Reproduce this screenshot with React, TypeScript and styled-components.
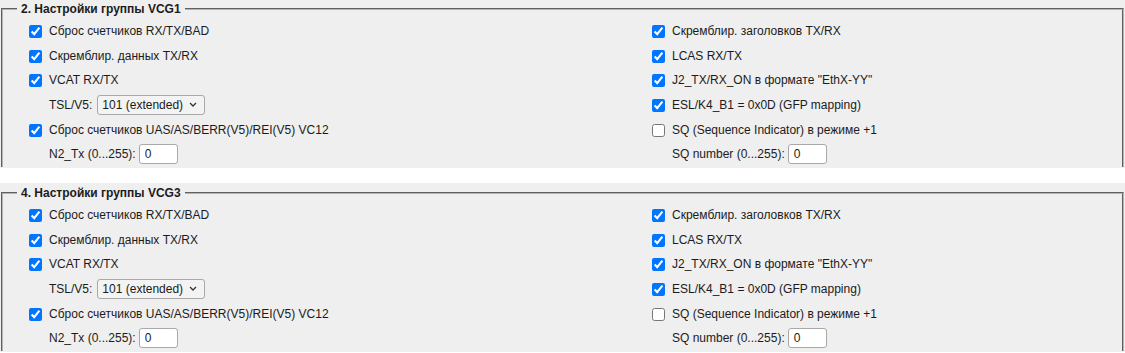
import styled, { createGlobalStyle } from "styled-components";

const GlobalStyle = createGlobalStyle`
  body {
    margin: 0;
    background: #fff;
    font-family: "Liberation Sans", Arial, sans-serif;
    font-size: 12px;
    color: #1b1b1b;
  }
`;

const Wrapper = styled.div`
  display: flex;
  flex-direction: column;
  gap: 15px;
  margin-top: -1px;
`;

const Group = styled.div`
  background: #efefef;
  padding-top: 3px;
  height: 169px;
  box-sizing: border-box;
  overflow: hidden;
`;

const Frame = styled.fieldset`
  margin: 0 1px;
  padding: 3px 0 0 14px;
  border: 2px groove #b4b4b4;
  border-bottom: none;
  min-width: 0;
`;

const Legend = styled.legend`
  font-weight: bold;
  padding: 0 4px;
  line-height: 14px;
`;

const Columns = styled.div`
  display: grid;
  grid-template-columns: 623px 1fr;
  padding-left: 8px;
`;

const Column = styled.div`
  display: flex;
  flex-direction: column;
`;

const Row = styled.label`
  display: flex;
  align-items: center;
  height: 24.6px;
  white-space: nowrap;
`;

const FieldRow = styled.div`
  display: flex;
  align-items: center;
  height: 24.6px;
  padding-left: 24px;
  white-space: nowrap;
`;

const Check = styled.input`
  width: 13px;
  height: 13px;
  margin: 1px 7px 0 4px;
`;

const SelectBox = styled.div`
  position: relative;
  margin-left: 5px;
  svg {
    position: absolute;
    right: 8px;
    top: 7px;
    pointer-events: none;
  }
`;

const Select = styled.select`
  appearance: none;
  width: 108px;
  height: 20px;
  padding: 0 0 0 4px;
  font: inherit;
  font-size: 12px;
  color: #1b1b1b;
  background: #f3f3f3;
  border: 1px solid #a9a9a9;
  border-radius: 3px;
`;

const NumInput = styled.input`
  width: 39px;
  height: 20px;
  box-sizing: border-box;
  margin-left: 3px;
  padding: 0 5px;
  font: inherit;
  font-size: 12px;
  color: #1b1b1b;
  background: #fff;
  border: 1px solid #a9a9a9;
  border-radius: 3px;
`;

type Opt = { text: string; checked: boolean };

const leftTop: Opt[] = [
  { text: "Сброс счетчиков RX/TX/BAD", checked: true },
  { text: "Скремблир. данных TX/RX", checked: true },
  { text: "VCAT RX/TX", checked: true },
];

const rightOpts: Opt[] = [
  { text: "Скремблир. заголовков TX/RX", checked: true },
  { text: "LCAS RX/TX", checked: true },
  { text: 'J2_TX/RX_ON в формате "EthX-YY"', checked: true },
  { text: "ESL/K4_B1 = 0x0D (GFP mapping)", checked: true },
  { text: "SQ (Sequence Indicator) в режиме +1", checked: false },
];

function Option({ text, checked }: Opt) {
  return (
    <Row>
      <Check type="checkbox" defaultChecked={checked} />
      <span>{text}</span>
    </Row>
  );
}

function Chevron() {
  return (
    <svg width="8" height="5" viewBox="0 0 8 5">
      <path d="M1 1l3 3 3-3" fill="none" stroke="#333" strokeWidth="1.3" />
    </svg>
  );
}

function VcgGroup({ title }: { title: string }) {
  return (
    <Group>
      <Frame>
        <Legend>{title}</Legend>
        <Columns>
          <Column>
            {leftTop.map((o) => (
              <Option key={o.text} {...o} />
            ))}
            <FieldRow>
              TSL/V5:
              <SelectBox>
                <Select defaultValue="101">
                  <option value="101">101 (extended)</option>
                </Select>
                <Chevron />
              </SelectBox>
            </FieldRow>
            <Option text="Сброс счетчиков UAS/AS/BERR(V5)/REI(V5) VC12" checked />
            <FieldRow>
              N2_Tx (0...255):
              <NumInput type="text" defaultValue="0" />
            </FieldRow>
          </Column>
          <Column>
            {rightOpts.map((o) => (
              <Option key={o.text} {...o} />
            ))}
            <FieldRow>
              SQ number (0...255):
              <NumInput type="text" defaultValue="0" />
            </FieldRow>
          </Column>
        </Columns>
      </Frame>
    </Group>
  );
}

export default function App() {
  return (
    <>
      <GlobalStyle />
      <Wrapper>
        <VcgGroup title="2. Настройки группы VCG1" />
        <VcgGroup title="4. Настройки группы VCG3" />
      </Wrapper>
    </>
  );
}
